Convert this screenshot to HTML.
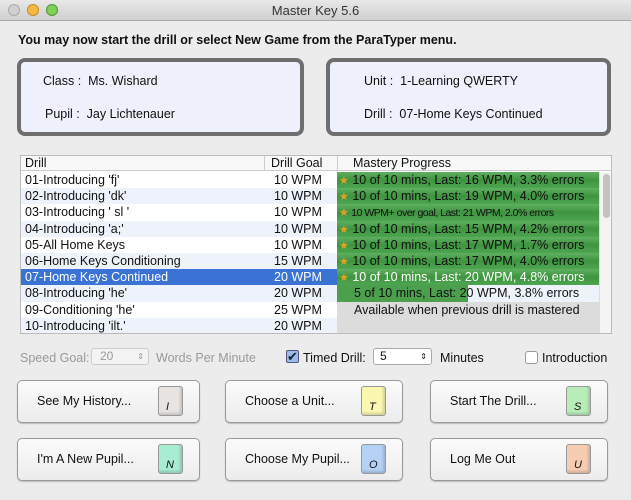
<!DOCTYPE html>
<html><head><style>
*{margin:0;padding:0;box-sizing:border-box}
body{width:631px;height:500px;overflow:hidden;background:#ececec;font-family:"Liberation Sans",sans-serif;font-size:12px;color:#111;position:relative}
.a{position:absolute}
.title{left:0;top:0;width:631px;height:21px;background:linear-gradient(#e8e8e8,#cfcfcf);border-bottom:1px solid #a9a9a9;text-align:center;line-height:21px;font-size:13px;color:#333}
.dot{width:12px;height:12px;border-radius:50%;top:4px}
.box{background:#eef0fb;border:4px solid #6e6e6e;border-radius:8px}
.tbl{left:20px;top:155px;width:592px;height:179px;border:1px solid #bbb;background:#fff;overflow:hidden}
.row{position:absolute;left:0;width:578px;height:16.2px;line-height:16px;font-size:12.5px}
.row>span{position:absolute;top:0}
.btn{background:linear-gradient(#fbfbfb,#ececec);border:1px solid #9a9a9a;border-radius:5px;box-shadow:0 1px 1px #bbb;height:43px}
.btn .t{position:absolute;left:19px;top:13px;font-size:12.5px}
.key{position:absolute;right:16px;top:5px;width:25px;height:30px;border:1px solid #999;border-radius:3px;font-style:italic;font-size:11px;padding:14px 0 0 7px;box-shadow:inset -2px -2px 2px rgba(0,0,0,.15)}
.star{color:#e8a020;font-size:11px}
</style></head><body>
<div class="a title">Master Key 5.6</div>
<div class="a dot" style="left:8px;background:#d0d0d0;border:1px solid #aaa"></div>
<div class="a dot" style="left:27px;background:#f5b840;border:1px solid #c98a20"></div>
<div class="a dot" style="left:46px;background:#7fcf5a;border:1px solid #4f9a32"></div>
<div class="a" style="left:18px;top:33px;font-weight:bold;font-size:12.5px">You may now start the drill or select New Game from the ParaTyper menu.</div>
<div class="a box" style="left:17px;top:58px;width:287px;height:78px"></div>
<div class="a" style="left:43px;top:74px;font-size:12.5px">Class :&nbsp; Ms. Wishard</div>
<div class="a" style="left:45px;top:107px;font-size:12.5px">Pupil :&nbsp; Jay Lichtenauer</div>
<div class="a box" style="left:326px;top:58px;width:285px;height:78px"></div>
<div class="a" style="left:364px;top:74px;font-size:12.5px">Unit :&nbsp; 1-Learning QWERTY</div>
<div class="a" style="left:364px;top:107px;font-size:12.5px">Drill :&nbsp; 07-Home Keys Continued</div>

<div class="a tbl">
 <div class="a" style="left:0;top:0;width:592px;height:15px;border-bottom:1px solid #ccc;background:#f8f8f8;font-size:12.5px;line-height:15px">
  <span class="a" style="left:4px">Drill</span>
  <span class="a" style="left:243px;border-left:1px solid #ccc;padding-left:6px;width:72px">Drill Goal</span>
  <span class="a" style="left:316px;border-left:1px solid #ccc;padding-left:15px;width:262px">Mastery Progress</span>
 </div>
 <div class="a" style="left:578px;top:16px;width:13px;height:163px;background:#f4f4f4;border-left:1px solid #ddd"><div style="margin:2px 0 0 3px;width:7px;height:44px;border-radius:4px;background:#c2c2c2"></div></div>
 <div id="rows"></div>
</div>
<div class="a" style="left:20px;top:351px;color:#999;font-size:12.5px">Speed Goal:</div>
<div class="a" style="left:91px;top:348px;width:58px;height:17px;border:1px solid #ccc;border-radius:3px;background:#f3f3f3;color:#999;padding-left:8px;line-height:15px">20<span style="position:absolute;right:4px;font-size:8px">&#8661;</span></div>
<div class="a" style="left:156px;top:351px;color:#999;font-size:12.5px">Words Per Minute</div>
<div class="a" style="left:286px;top:350px;width:13px;height:13px;border:1px solid #557;border-radius:2px;background:#9bbbe8;color:#123;font-size:13px;line-height:11px;text-align:center">✔</div>
<div class="a" style="left:303px;top:351px;font-size:12.5px">Timed Drill:</div>
<div class="a" style="left:373px;top:348px;width:59px;height:17px;border:1px solid #aaa;border-radius:3px;background:#fff;padding-left:6px;line-height:15px">5<span style="position:absolute;right:4px;font-size:8px">&#8661;</span></div>
<div class="a" style="left:440px;top:351px;font-size:12.5px">Minutes</div>
<div class="a" style="left:525px;top:351px;width:13px;height:13px;border:1px solid #999;border-radius:3px;background:#fff"></div>
<div class="a" style="left:542px;top:351px;font-size:12.5px">Introduction</div>

<div class="a btn" style="left:17px;top:380px;width:183px"><span class="t">See My History...</span><div class="key" style="background:#e8e4e2">I</div></div>
<div class="a btn" style="left:225px;top:380px;width:178px"><span class="t">Choose a Unit...</span><div class="key" style="background:#f9f7b0">T</div></div>
<div class="a btn" style="left:430px;top:380px;width:178px"><span class="t">Start The Drill...</span><div class="key" style="background:#b8edb8">S</div></div>
<div class="a btn" style="left:17px;top:438px;width:183px"><span class="t">I'm A New Pupil...</span><div class="key" style="background:#a8ecd2">N</div></div>
<div class="a btn" style="left:225px;top:438px;width:178px"><span class="t">Choose My Pupil...</span><div class="key" style="background:#b5d2f5">O</div></div>
<div class="a btn" style="left:430px;top:438px;width:178px"><span class="t">Log Me Out</span><div class="key" style="background:#f6cdb2">U</div></div>
<script>
var d=[["01-Introducing 'fj'","10","10 of 10 mins, Last: 16 WPM, 3.3% errors"],["02-Introducing 'dk'","10","10 of 10 mins, Last: 19 WPM, 4.0% errors"],["03-Introducing ' sl '","10","10 WPM+ over goal, Last: 21 WPM, 2.0% errors"],["04-Introducing 'a;'","10","10 of 10 mins, Last: 15 WPM, 4.2% errors"],["05-All Home Keys","10","10 of 10 mins, Last: 17 WPM, 1.7% errors"],["06-Home Keys Conditioning","15","10 of 10 mins, Last: 17 WPM, 4.0% errors"],["07-Home Keys Continued","20","10 of 10 mins, Last: 20 WPM, 4.8% errors"],["08-Introducing 'he'","20","5 of 10 mins, Last: 20 WPM, 3.8% errors"],["09-Conditioning 'he'","25","Available when previous drill is mastered"],["10-Introducing 'ilt.'","20",""]];
var h="";
d.forEach(function(r,i){var top=16+i*16.2;var sel=i==6;var bg=sel?"#3a73d3":(i%2?"#eef3fb":"#fff");var c=sel?"#fff":"#111";
var pb,pt="";
if(i<7){pb="linear-gradient(#5fb060,#3f9440 50%,#4ea550)";pt=(i==2?'<span class="star">★</span><span style="font-size:10.5px;letter-spacing:-0.5px"> ':'<span class="star">★</span><span> ')+r[2]+'</span>';}
else if(i==7){pb="linear-gradient(90deg,#4ca04d 0,#4ca04d 131px,#eef3fb 131px)";pt='<span style="padding-left:15px">'+r[2]+'</span>';}
else{pb="#dcdcdc";pt='<span style="padding-left:15px">'+r[2]+'</span>';}
h+='<div class="row" style="top:'+top+'px;background:'+bg+';color:'+c+'"><span style="left:4px">'+r[0]+'</span><span style="left:253px">'+r[1]+' WPM</span><span style="left:316px;width:262px;height:16.2px;background:'+pb+';color:'+(sel?"#fff":"#111")+';padding-left:2px;white-space:nowrap;overflow:hidden">'+pt+'</span></div>';});
document.getElementById("rows").innerHTML=h;
</script>
</body></html>
